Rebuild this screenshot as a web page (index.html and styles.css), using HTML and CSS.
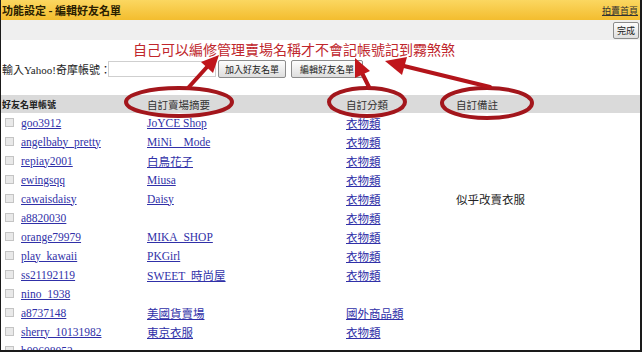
FILE: index.html
```html
<!DOCTYPE html>
<html lang="zh-TW">

<head>
    <meta charset="UTF-8">
    <title>功能設定 - 編輯好友名單</title>
    <link rel="stylesheet" href="styles.css">
</head>

<body>
    <div class="page">
        <div class="titlebar">
            <span class="title">功能設定 - 編輯好友名單</span>
            <a href="#" class="home">拍賣首頁</a>
        </div>
        <div class="toolbar">
            <button class="btn">完成</button>
        </div>
        <div class="note">自己可以編修管理賣場名稱才不會記帳號記到霧煞煞</div>
        <div class="addrow">
            <label for="account">輸入Yahoo!奇摩帳號：</label>
            <input type="text" id="account">
            <button class="btn btn-add">加入好友名單</button>
            <button class="btn btn-edit">編輯好友名單</button>
        </div>

        <div class="list">
            <div class="row head">
                <div class="col first">好友名單帳號</div>
                <div class="col">自訂賣場摘要</div>
                <div class="col">自訂分類</div>
                <div class="col">自訂備註</div>
            </div>
            <div class="row">
                <div class="col"><input type="checkbox" class="check"><a href="#">goo3912</a></div>
                <div class="col"><a href="#">JoYCE Shop</a></div>
                <div class="col"><a href="#">衣物類</a></div>
                <div class="col"></div>
            </div>
            <div class="row">
                <div class="col"><input type="checkbox" class="check"><a href="#">angelbaby_pretty</a></div>
                <div class="col"><a href="#">MiNi&nbsp;&nbsp;&nbsp;&nbsp;Mode</a></div>
                <div class="col"><a href="#">衣物類</a></div>
                <div class="col"></div>
            </div>
            <div class="row">
                <div class="col"><input type="checkbox" class="check"><a href="#">repiay2001</a></div>
                <div class="col"><a href="#">白鳥花子</a></div>
                <div class="col"><a href="#">衣物類</a></div>
                <div class="col"></div>
            </div>
            <div class="row">
                <div class="col"><input type="checkbox" class="check"><a href="#">ewingsqq</a></div>
                <div class="col"><a href="#">Miusa</a></div>
                <div class="col"><a href="#">衣物類</a></div>
                <div class="col"></div>
            </div>
            <div class="row">
                <div class="col"><input type="checkbox" class="check"><a href="#">cawaisdaisy</a></div>
                <div class="col"><a href="#">Daisy</a></div>
                <div class="col"><a href="#">衣物類</a></div>
                <div class="col">似乎改賣衣服</div>
            </div>
            <div class="row">
                <div class="col"><input type="checkbox" class="check"><a href="#">a8820030</a></div>
                <div class="col"></div>
                <div class="col"><a href="#">衣物類</a></div>
                <div class="col"></div>
            </div>
            <div class="row">
                <div class="col"><input type="checkbox" class="check"><a href="#">orange79979</a></div>
                <div class="col"><a href="#">MIKA_SHOP</a></div>
                <div class="col"><a href="#">衣物類</a></div>
                <div class="col"></div>
            </div>
            <div class="row">
                <div class="col"><input type="checkbox" class="check"><a href="#">play_kawaii</a></div>
                <div class="col"><a href="#">PKGirl</a></div>
                <div class="col"><a href="#">衣物類</a></div>
                <div class="col"></div>
            </div>
            <div class="row">
                <div class="col"><input type="checkbox" class="check"><a href="#">ss21192119</a></div>
                <div class="col"><a href="#">SWEET&nbsp;&nbsp;時尚屋</a></div>
                <div class="col"><a href="#">衣物類</a></div>
                <div class="col"></div>
            </div>
            <div class="row">
                <div class="col"><input type="checkbox" class="check"><a href="#">nino_1938</a></div>
                <div class="col"></div>
                <div class="col"></div>
                <div class="col"></div>
            </div>
            <div class="row">
                <div class="col"><input type="checkbox" class="check"><a href="#">a8737148</a></div>
                <div class="col"><a href="#">美國貨賣場</a></div>
                <div class="col"><a href="#">國外商品類</a></div>
                <div class="col"></div>
            </div>
            <div class="row">
                <div class="col"><input type="checkbox" class="check"><a href="#">sherry_10131982</a></div>
                <div class="col"><a href="#">東京衣服</a></div>
                <div class="col"><a href="#">衣物類</a></div>
                <div class="col"></div>
            </div>
            <div class="row">
                <div class="col"><input type="checkbox" class="check"><a href="#">b09608052</a></div>
                <div class="col"></div>
                <div class="col"></div>
                <div class="col"></div>
            </div>
        </div>
    </div>

    <!-- 標註：紅圈與箭頭 -->
    <svg class="marks" width="642" height="352" viewBox="0 0 642 352">
        <g fill="none" stroke="#a3161c" stroke-width="4">
            <ellipse cx="179" cy="102" rx="53" ry="14" />
            <ellipse cx="367" cy="102" rx="38" ry="14" />
            <ellipse cx="487" cy="103" rx="45" ry="15" />
        </g>
        <g stroke="#b3141a" stroke-width="4" stroke-linecap="round">
            <line x1="188" y1="88" x2="207" y2="67" />
            <line x1="369" y1="87" x2="362" y2="73" />
            <line x1="490" y1="87" x2="404" y2="66" />
        </g>
        <g fill="#c0161c">
            <polygon points="219,55 213,73 201,62" />
            <polygon points="355,58 370,71 355,78" />
            <polygon points="385,61 407,57 402,75" />
        </g>
    </svg>
</body>

</html>
```

FILE: styles.css
```css
body {
    margin: 0;
    position: relative;
    font-family: "Liberation Serif", "Noto Sans CJK TC", serif;
    color: #222;
}

.page {
    width: 642px;
    height: 352px;
    box-sizing: border-box;
    border-left: 1px solid #1a1a1a;
    border-right: 2px solid #1a1a1a;
    border-bottom: 2px solid #1a1a1a;
    overflow: hidden;
    background: #fff;
}

.titlebar {
    height: 20px;
    display: flex;
    align-items: center;
    justify-content: space-between;
    padding: 0 2px 0 1px;
    background: linear-gradient(#fbd761, #f3bd2f);
}

.title {
    font-family: "Noto Sans CJK TC", sans-serif;
    font-size: 11px;
    font-weight: bold;
    color: #2a2000;
}

.home {
    font-family: "Noto Sans CJK TC", sans-serif;
    font-size: 9px;
    color: #333;
}

.toolbar {
    height: 20px;
    display: flex;
    align-items: center;
    justify-content: flex-end;
    padding-right: 1px;
    background: #efefef;
}

.btn {
    font-family: "Noto Sans CJK TC", sans-serif;
    font-size: 9px;
    color: #222;
    height: 17px;
    padding: 0 3px;
    border: 1px solid #8c8c8c;
    border-radius: 2px;
    background: linear-gradient(#fdfdfd, #dedede);
}

.note {
    height: 19px;
    line-height: 19px;
    padding-left: 132px;
    font-family: "Noto Sans CJK TC", sans-serif;
    font-size: 14px;
    color: #c0262c;
}

.addrow {
    height: 18px;
    margin-top: 1px;
    display: flex;
    align-items: center;
    padding-left: 1px;
}

.addrow label {
    font-size: 11px;
    width: 106px;
    white-space: nowrap;
}

.addrow input {
    width: 108px;
    height: 16px;
    box-sizing: border-box;
    border: 1px solid #cfcfcf;
    margin: 0;
}

.btn-add {
    height: 18px;
    width: 68px;
    margin-left: 2px;
}

.btn-edit {
    height: 18px;
    width: 72px;
    margin-left: 5px;
}

.list {
    margin-top: 17px;
}

.row {
    display: grid;
    grid-template-columns: 145px 199px 110px 1fr;
    height: 19px;
    align-items: center;
    padding-left: 1px;
    font-size: 11.5px;
}

.row.head {
    height: 18px;
    background: #dadada;
    font-family: "Noto Sans CJK TC", sans-serif;
    font-size: 10.5px;
    color: #333;
}

.row.head .first {
    font-size: 9px;
    font-weight: bold;
    color: #222;
}

.col {
    white-space: nowrap;
    display: flex;
    align-items: center;
}

.col a {
    color: #3030a8;
}

.check {
    appearance: none;
    width: 9px;
    height: 9px;
    margin: 0 7px 0 3px;
    border: 1px solid #c4c4c4;
    background: #e9e9e9;
}

.marks {
    position: absolute;
    top: 0;
    left: 0;
    pointer-events: none;
}
```
